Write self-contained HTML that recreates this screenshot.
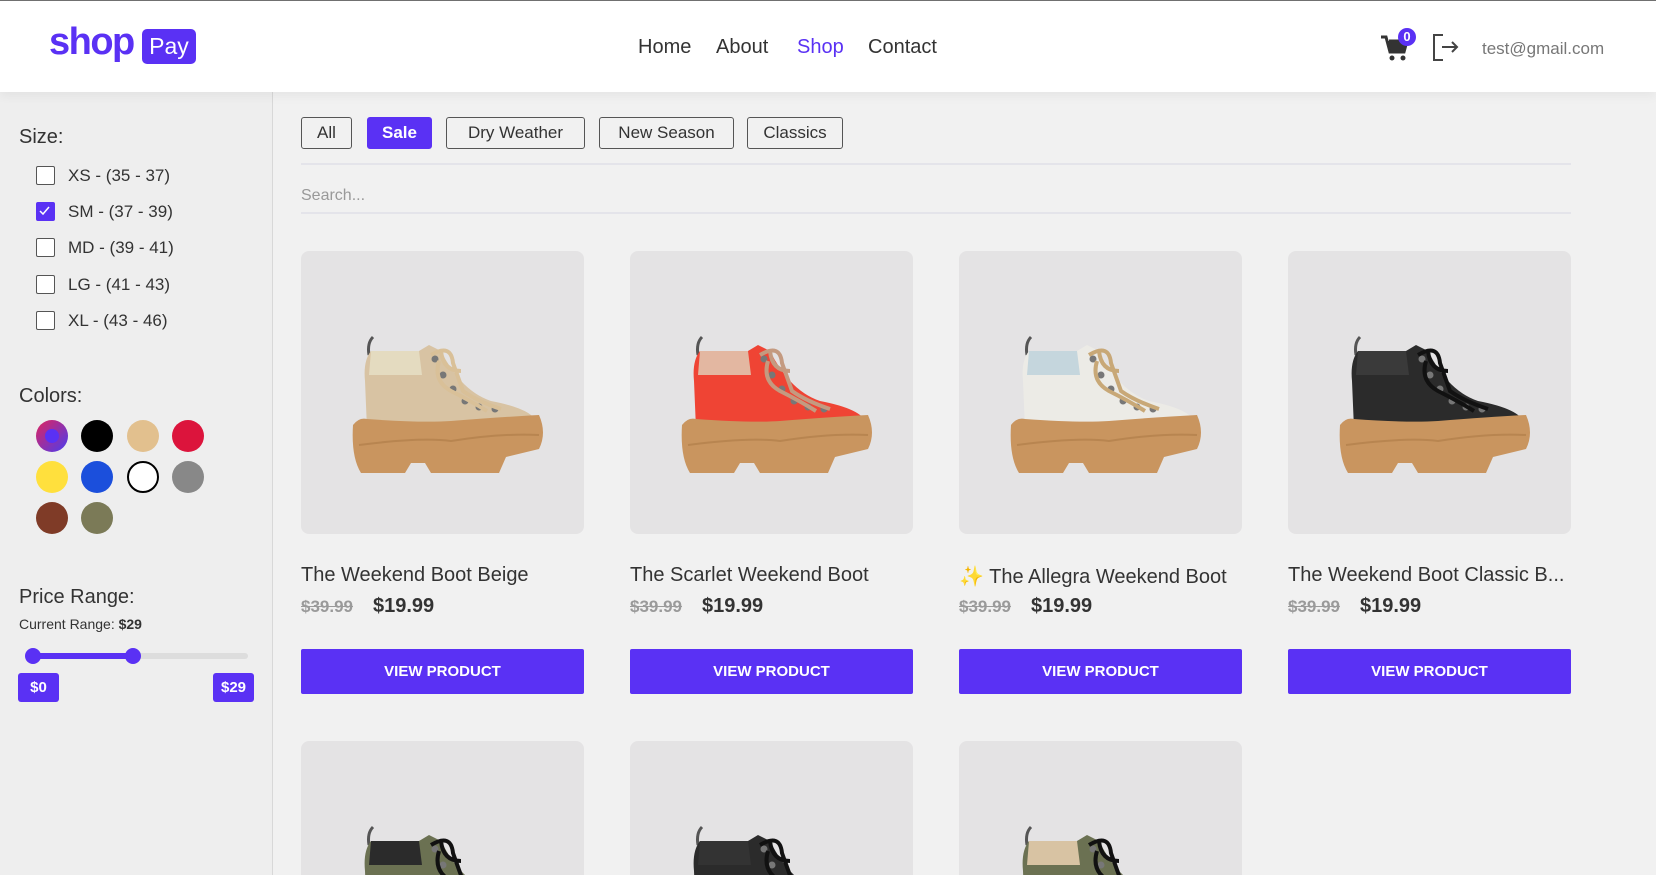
<!DOCTYPE html>
<html><head><meta charset="utf-8"><style>
*{box-sizing:border-box;margin:0;padding:0}
html,body{width:1656px;height:875px;overflow:hidden}
body{background:#f1f1f1;font-family:"Liberation Sans","DejaVu Sans",sans-serif;color:#333;position:relative}
#wrap{position:absolute;left:0;top:0;width:1656px;height:875px;overflow:hidden}
.abs{position:absolute}
header{position:absolute;left:0;top:0;width:1656px;height:92px;background:#fff;border-top:1px solid #707070;box-shadow:0 4px 10px rgba(0,0,0,0.05);z-index:2}
.nav{font-size:20px;color:#333;top:35px}
aside{position:absolute;left:0;top:92px;width:273px;height:783px;background:#eeeeee;border-right:1px solid #d8d8d8}
.cb{position:absolute;left:36px;width:19px;height:19px;border:1.5px solid #555;border-radius:2px;background:#fff}
.lbl{position:absolute;left:68px;font-size:17px;color:#333}
.dot{position:absolute;width:32px;height:32px;border-radius:50%}
.fbtn{position:absolute;top:117px;height:32px;border:1px solid #555;border-radius:3px;font-size:17px;line-height:30px;text-align:center;color:#333;background:transparent}
.img{position:absolute;width:283px;height:283px;background:#e4e3e4;border-radius:8px;overflow:hidden}
.title{position:absolute;font-size:20px;color:#333;white-space:nowrap}
.old{position:absolute;font-size:17px;color:#9a9a9a;text-decoration:line-through;font-weight:bold}
.new{position:absolute;font-size:20px;color:#333;font-weight:bold}
.btn{position:absolute;width:283px;height:45px;background:#5a31f4;color:#fff;font-weight:bold;font-size:15px;line-height:45px;text-align:center;border-radius:2px}
</style></head><body><div id="wrap">
<header>
  <div class="abs" style="left:49px;top:20px;font-size:38px;font-weight:bold;color:#5a31f4;letter-spacing:-1.5px">shop</div>
  <div class="abs" style="left:142px;top:28px;width:54px;height:35px;background:#5a31f4;border-radius:5px;color:#fff;font-size:23px;line-height:34px;text-align:center">Pay</div>
  <div class="abs nav" style="left:638px">Home</div>
  <div class="abs nav" style="left:716px">About</div>
  <div class="abs nav" style="left:797px;color:#5a31f4">Shop</div>
  <div class="abs nav" style="left:868px">Contact</div>
  <svg class="abs" style="left:1380px;top:32px" width="30" height="30" viewBox="0 0 30 30"><path d="M1 4h5l4 15h14l3-11H9" fill="none" stroke="#333" stroke-width="3"/><path d="M8 8h19l-3 11H11z" fill="#333"/><circle cx="12" cy="25" r="2.5" fill="#333"/><circle cx="23" cy="25" r="2.5" fill="#333"/></svg>
  <div class="abs" style="left:1398px;top:27px;width:18px;height:18px;border-radius:50%;background:#5a31f4;color:#fff;font-size:13px;font-weight:bold;text-align:center;line-height:18px">0</div>
  <svg class="abs" style="left:1433px;top:33px" width="28" height="27" viewBox="0 0 28 27"><path d="M10 1H1v25h9" fill="none" stroke="#444" stroke-width="2"/><path d="M9 13h15M19 8l5 5-5 5" fill="none" stroke="#444" stroke-width="2"/></svg>
  <div class="abs" style="left:1482px;top:38px;font-size:17px;color:#777">test@gmail.com</div>
</header>
<aside>
  <div class="abs" style="left:19px;top:34px;font-size:20px">Size:</div>
  <div class="cb" style="top:74px"></div><div class="lbl" style="top:74px">XS - (35 - 37)</div>
  <div class="cb" style="top:110px;background:#5a31f4;border-color:#5a31f4"><svg width="16" height="16" viewBox="0 0 16 16" style="position:absolute;left:0;top:0"><path d="M3 8l3 3 6-7" fill="none" stroke="#fff" stroke-width="1.5"/></svg></div><div class="lbl" style="top:110px">SM - (37 - 39)</div>
  <div class="cb" style="top:146px"></div><div class="lbl" style="top:146px">MD - (39 - 41)</div>
  <div class="cb" style="top:183px"></div><div class="lbl" style="top:183px">LG - (41 - 43)</div>
  <div class="cb" style="top:219px"></div><div class="lbl" style="top:219px">XL - (43 - 46)</div>
  <div class="abs" style="left:19px;top:293px;font-size:20px">Colors:</div>
  <div class="dot" style="left:36px;top:328px;background:linear-gradient(135deg,#e0245e,#4a3cf0)"><div style="position:absolute;left:9px;top:9px;width:14px;height:14px;border-radius:50%;background:#5a31f4"></div></div>
  <div class="dot" style="left:81px;top:328px;background:#000"></div>
  <div class="dot" style="left:127px;top:328px;background:#e2c08e"></div>
  <div class="dot" style="left:172px;top:328px;background:#dc143c"></div>
  <div class="dot" style="left:36px;top:369px;background:#ffe03d"></div>
  <div class="dot" style="left:81px;top:369px;background:#1b4fdc"></div>
  <div class="dot" style="left:127px;top:369px;background:#fff;border:2px solid #000"></div>
  <div class="dot" style="left:172px;top:369px;background:#888"></div>
  <div class="dot" style="left:36px;top:410px;background:#7f3b27"></div>
  <div class="dot" style="left:81px;top:410px;background:#7b7a57"></div>
  <div class="abs" style="left:19px;top:494px;font-size:20px">Price Range:</div>
  <div class="abs" style="left:19px;top:524px;font-size:14px">Current Range: <b>$29</b></div>
  <div class="abs" style="left:30px;top:561px;width:218px;height:6px;background:#ddd;border-radius:3px"></div>
  <div class="abs" style="left:33px;top:561px;width:100px;height:6px;background:#5a31f4"></div>
  <div class="abs" style="left:25px;top:556px;width:16px;height:16px;border-radius:50%;background:#5a31f4"></div>
  <div class="abs" style="left:125px;top:556px;width:16px;height:16px;border-radius:50%;background:#5a31f4"></div>
  <div class="abs" style="left:18px;top:581px;width:41px;height:29px;background:#5a31f4;border-radius:3px;color:#fff;font-size:15px;font-weight:bold;line-height:29px;text-align:center">$0</div>
  <div class="abs" style="left:213px;top:581px;width:41px;height:29px;background:#5a31f4;border-radius:3px;color:#fff;font-size:15px;font-weight:bold;line-height:29px;text-align:center">$29</div>
</aside>
<div class="fbtn" style="left:301px;width:51px">All</div>
<div class="fbtn" style="left:367px;width:65px;background:#5a31f4;border-color:#5a31f4;color:#fff;font-weight:bold">Sale</div>
<div class="fbtn" style="left:446px;width:139px">Dry Weather</div>
<div class="fbtn" style="left:599px;width:135px">New Season</div>
<div class="fbtn" style="left:747px;width:96px">Classics</div>
<div class="abs" style="left:301px;top:163px;width:1270px;height:2px;background:#e4e4ea"></div>
<div class="abs" style="left:301px;top:187px;font-size:16px;color:#999">Search...</div>
<div class="abs" style="left:301px;top:212px;width:1270px;height:2px;background:#e4e4ea"></div>

<svg width="0" height="0" style="position:absolute"><defs>
<g id="boot">
<path d="M72 86 Q66 92 68 104" fill="none" stroke="#555" stroke-width="3"/>
<path d="M66 178 L64 130 Q62 110 70 100 L118 100 L128 94 L140 100 Q160 140 190 150 Q232 158 236 172 L236 182 L66 182 Z" fill="var(--c)"/>
<path d="M70 100 L118 100 L121 124 L68 124 Z" fill="var(--k)"/>
<g fill="#777"><circle cx="134" cy="108" r="3.5"/><circle cx="142" cy="124" r="3.5"/><circle cx="152" cy="138" r="3.5"/><circle cx="164" cy="150" r="3.5"/><circle cx="178" cy="156" r="3.5"/><circle cx="194" cy="158" r="3.5"/></g>
<path d="M130 104 Q150 92 152 112 L162 140 Q176 150 200 158 M138 110 Q132 130 150 140 Q170 150 186 160 M140 100 Q142 120 160 120" fill="none" stroke="var(--l)" stroke-width="4"/>
<path d="M52 174 Q58 166 66 168 Q120 172 150 170 Q200 166 238 164 Q246 182 238 198 L205 206 L198 222 L130 222 L124 212 L110 212 L104 222 L60 222 Q50 206 52 174 Z" fill="#c9955f"/>
<path d="M58 194 Q120 186 150 190 Q200 182 238 184" fill="none" stroke="#b88550" stroke-width="2"/>
</g></defs></svg>

<div class="img" style="left:301px;top:251px"><svg width="283" height="283" style="--c:#d8c3a3;--k:#e4dbc0;--l:#d9c098"><use href="#boot"/></svg></div>
<div class="img" style="left:630px;top:251px"><svg width="283" height="283" style="--c:#ef4434;--k:#e3b7a1;--l:#c49a80"><use href="#boot"/></svg></div>
<div class="img" style="left:959px;top:251px"><svg width="283" height="283" style="--c:#ecebe6;--k:#c5d6dd;--l:#c8a877"><use href="#boot"/></svg></div>
<div class="img" style="left:1288px;top:251px"><svg width="283" height="283" style="--c:#2b2b2b;--k:#3a3a3a;--l:#111"><use href="#boot"/></svg></div>

<div class="title" style="left:301px;top:564px">The Weekend Boot Beige</div>
<div class="title" style="left:630px;top:564px">The Scarlet Weekend Boot</div>
<div class="title" style="left:959px;top:564px"><span style="color:#f5c400">✨</span> The Allegra Weekend Boot</div>
<div class="title" style="left:1288px;top:564px">The Weekend Boot Classic B...</div>
<div class="old" style="left:301px;top:597px">$39.99</div><div class="new" style="left:373px;top:595px">$19.99</div>
<div class="old" style="left:630px;top:597px">$39.99</div><div class="new" style="left:702px;top:595px">$19.99</div>
<div class="old" style="left:959px;top:597px">$39.99</div><div class="new" style="left:1031px;top:595px">$19.99</div>
<div class="old" style="left:1288px;top:597px">$39.99</div><div class="new" style="left:1360px;top:595px">$19.99</div>
<div class="btn" style="left:301px;top:649px">VIEW PRODUCT</div>
<div class="btn" style="left:630px;top:649px">VIEW PRODUCT</div>
<div class="btn" style="left:959px;top:649px">VIEW PRODUCT</div>
<div class="btn" style="left:1288px;top:649px">VIEW PRODUCT</div>

<div class="img" style="left:301px;top:741px;height:134px;border-radius:8px 8px 0 0"><svg width="283" height="283" style="--c:#6b7152;--k:#2b2b2b;--l:#111"><use href="#boot"/></svg></div>
<div class="img" style="left:630px;top:741px;height:134px;border-radius:8px 8px 0 0"><svg width="283" height="283" style="--c:#2b2b2b;--k:#333;--l:#111"><use href="#boot"/></svg></div>
<div class="img" style="left:959px;top:741px;height:134px;border-radius:8px 8px 0 0"><svg width="283" height="283" style="--c:#6b7152;--k:#d8c3a3;--l:#111"><use href="#boot"/></svg></div>
</div></body></html>
